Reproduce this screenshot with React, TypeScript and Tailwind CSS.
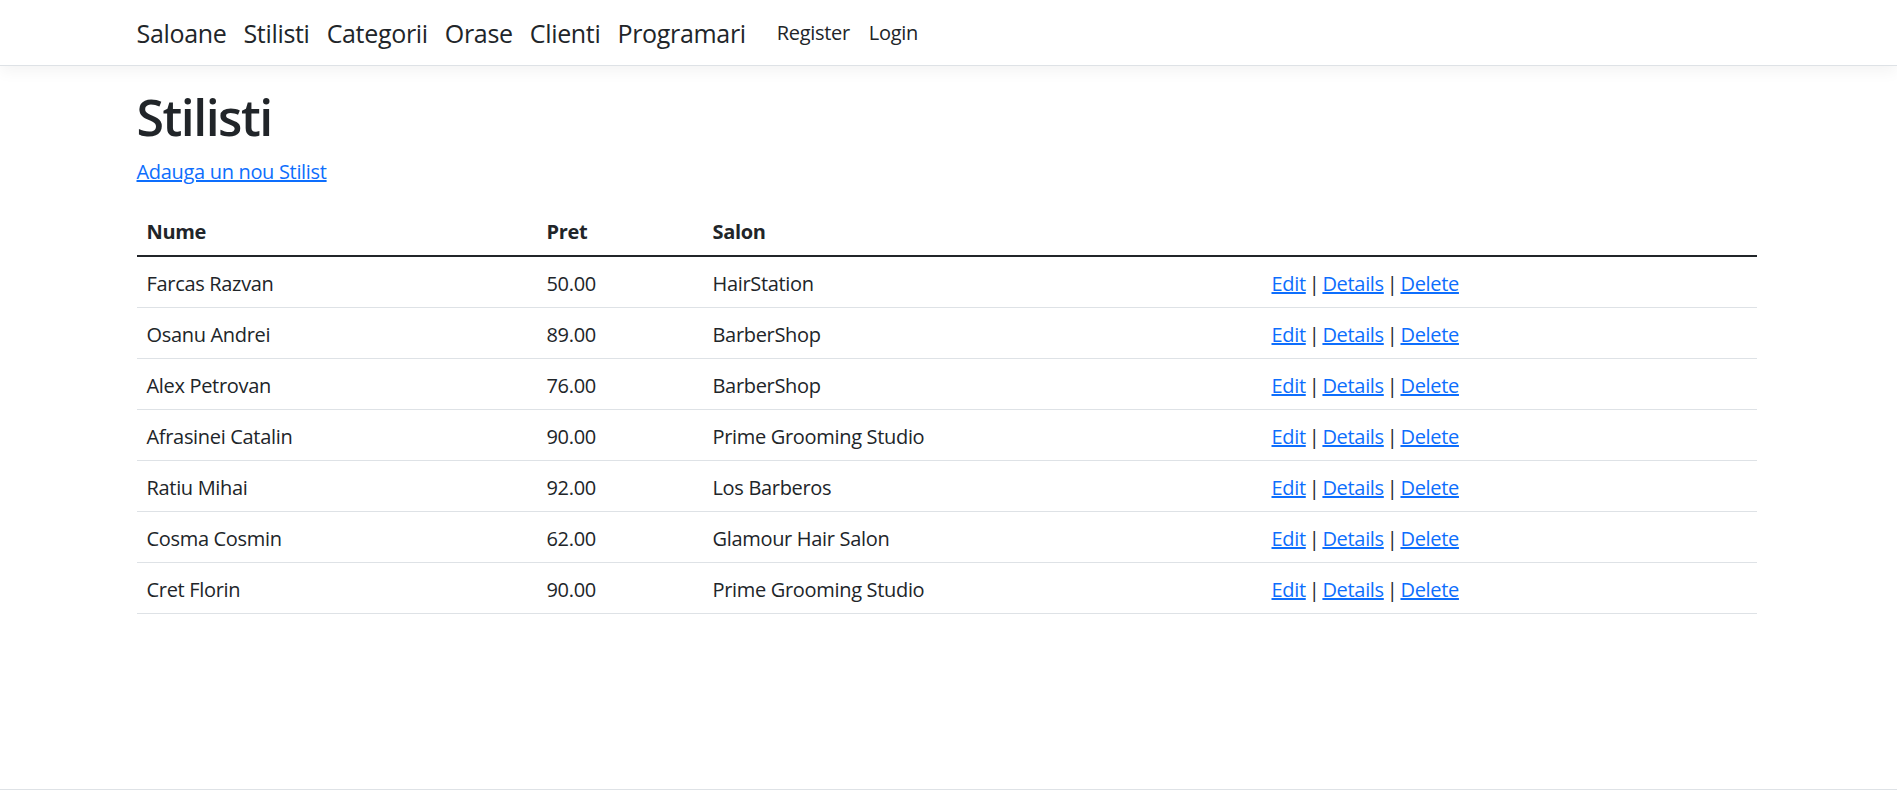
const stylists = [
  { name: 'Farcas Razvan', price: '50.00', salon: 'HairStation' },
  { name: 'Osanu Andrei', price: '89.00', salon: 'BarberShop' },
  { name: 'Alex Petrovan', price: '76.00', salon: 'BarberShop' },
  { name: 'Afrasinei Catalin', price: '90.00', salon: 'Prime Grooming Studio' },
  { name: 'Ratiu Mihai', price: '92.00', salon: 'Los Barberos' },
  { name: 'Cosma Cosmin', price: '62.00', salon: 'Glamour Hair Salon' },
  { name: 'Cret Florin', price: '90.00', salon: 'Prime Grooming Studio' },
];

const mainLinks = ['Saloane', 'Stilisti', 'Categorii', 'Orase', 'Clienti', 'Programari'];

function Navbar() {
  return (
    <header className="h-[66px] bg-white border-b border-[#dee2e6] shadow-[0_5px_15px_rgba(0,0,0,0.05)]">
      <div className="w-[1650px] mx-auto pl-[13px] pr-[17px] h-full flex items-center text-[#212529]">
        <nav className="flex items-center gap-[17px] text-[25px] leading-[30px]">
          {mainLinks.map((l) => (
            <a key={l} href="#" className="hover:text-black">
              {l}
            </a>
          ))}
        </nav>
        <nav className="flex items-center gap-[19px] ml-[31px] text-[20px] leading-[30px]">
          <a href="#">Register</a>
          <a href="#">Login</a>
        </nav>
      </div>
    </header>
  );
}

function Actions() {
  return (
    <>
      <a href="#" className="text-[#0d6efd] underline">Edit</a>
      <span className="mx-[3px]">|</span>
      <a href="#" className="text-[#0d6efd] underline">Details</a>
      <span className="mx-[3px]">|</span>
      <a href="#" className="text-[#0d6efd] underline">Delete</a>
    </>
  );
}

function StylistTable() {
  return (
    <table className="w-full border-collapse text-[20px] leading-[30px] table-fixed">
      <colgroup>
        <col className="w-[400px]" />
        <col className="w-[166px]" />
        <col className="w-[559px]" />
        <col />
      </colgroup>
      <thead>
        <tr className="border-b-2 border-[#212529] text-left">
          <th className="px-[10px] pt-[12px] pb-[8px] font-bold">Nume</th>
          <th className="px-[10px] pt-[12px] pb-[8px] font-bold">Pret</th>
          <th className="px-[10px] pt-[12px] pb-[8px] font-bold">Salon</th>
          <th className="px-[10px] pt-[12px] pb-[8px]"></th>
        </tr>
      </thead>
      <tbody>
        {stylists.map((s) => (
          <tr key={s.name} className="border-b border-[#dee2e6]">
            <td className="px-[10px] pt-[12px] pb-[8px]">{s.name}</td>
            <td className="px-[10px] pt-[12px] pb-[8px]">{s.price}</td>
            <td className="px-[10px] pt-[12px] pb-[8px]">{s.salon}</td>
            <td className="px-[10px] pt-[12px] pb-[8px]">
              <Actions />
            </td>
          </tr>
        ))}
      </tbody>
    </table>
  );
}

export default function App() {
  return (
    <div
      className="min-h-[850px] flex flex-col bg-white text-[#212529] tracking-[-0.02em]"
      style={{ fontFamily: '"Open Sans", "Noto Sans", sans-serif' }}
    >
      <Navbar />
      <main className="flex-1 w-[1650px] mx-auto pl-[13px] pr-[17px] pt-[21px]">
        <h1 className="text-[50px] leading-[60px] font-semibold tracking-[-0.03em] mb-[10px]">Stilisti</h1>
        <p className="mb-[18px] text-[20px] leading-[30px]">
          <a href="#" className="text-[#0d6efd] underline">Adauga un nou Stilist</a>
        </p>
        <StylistTable />
      </main>
      <footer className="h-[61px] border-t border-[#dee2e6]"></footer>
    </div>
  );
}
